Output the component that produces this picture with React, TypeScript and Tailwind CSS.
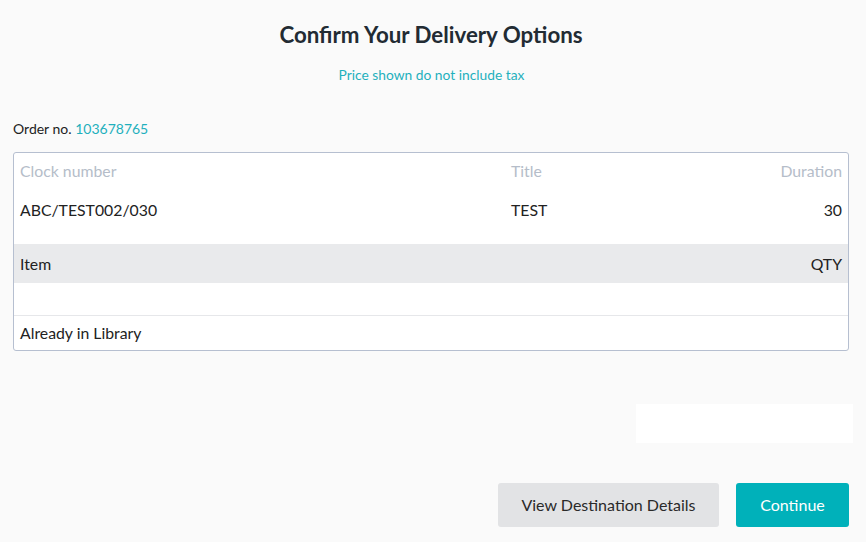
export default function App() {
  return (
    <div className="min-h-[542px] w-full bg-[#fafafa] font-['Lato','Open_Sans',sans-serif] text-[#222]">
      <div className="flex flex-col px-[13px] pt-[20px]">
        <h1 className="pr-[4px] text-center text-[22.3px] font-bold leading-[30px] text-[#222b33]">
          Confirm Your Delivery Options
        </h1>
        <p className="mt-[16px] pr-[3px] text-center text-[13.8px] leading-[18px] text-[#1fb0bd]">
          Price shown do not include tax
        </p>
        <p className="mt-[36px] text-[14px] leading-[18px]">
          Order no. <span className="text-[#1fb0bd]">103678765</span>
        </p>

        {/* Order table */}
        <div className="mt-[14px] w-[836px] overflow-hidden rounded-[3px] border border-[#b6bfd0] bg-white text-[15.8px]">
          <div className="flex h-[36px] items-center px-[6px] text-[#b5bdc9]">
            <span className="w-[491px]">Clock number</span>
            <span className="flex-1">Title</span>
            <span>Duration</span>
          </div>
          <div className="flex h-[42px] items-center px-[6px]">
            <span className="w-[491px]">ABC/TEST002/030</span>
            <span className="flex-1">TEST</span>
            <span>30</span>
          </div>
          <div className="mt-[13px] flex h-[39px] items-center justify-between bg-[#e9eaec] px-[6px]">
            <span>Item</span>
            <span>QTY</span>
          </div>
          <div className="h-[33px] border-b border-[#e6e7ea]" />
          <div className="flex h-[34px] items-center px-[6px]">
            <span>Already in Library</span>
          </div>
        </div>

        <div className="mt-[53px] flex justify-end">
          <div className="h-[39px] w-[217px] bg-white" />
        </div>

        <div className="mt-[40px] flex justify-end gap-[17px] pr-[4px]">
          <button className="h-[44px] w-[221px] rounded-[3px] bg-[#e2e3e5] text-[16px] text-[#2a2a2a]">
            View Destination Details
          </button>
          <button className="h-[44px] w-[113px] rounded-[3px] bg-[#00b1ba] text-[16px] text-white">
            Continue
          </button>
        </div>
      </div>
    </div>
  );
}
